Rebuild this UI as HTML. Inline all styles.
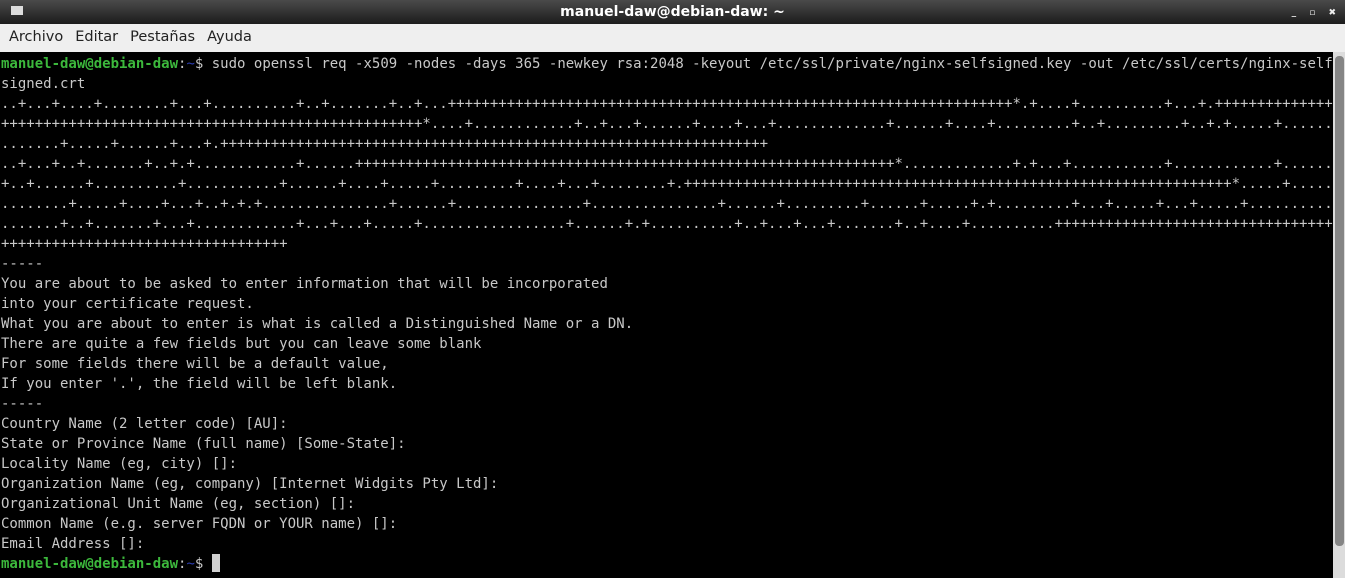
<!DOCTYPE html>
<html><head><meta charset="utf-8"><style>
html,body{margin:0;padding:0;width:1345px;height:578px;overflow:hidden;background:#000}
#title{position:absolute;left:0;top:0;width:1345px;height:24px;background:linear-gradient(#4a4a4a,#1c1c1c);color:#fff;font:bold 14px "DejaVu Sans","Liberation Sans",sans-serif;text-align:center;line-height:24px}
#title .ic{position:absolute;left:11px;top:6px;width:12px;height:9px;background:#ddd}
#title .btn{position:absolute;right:4px;top:1px;font-size:9px;color:#eee;letter-spacing:5px}
#menu{position:absolute;left:0;top:24px;width:1345px;height:28px;background:#efefef;font:14.5px "DejaVu Sans","Liberation Sans",sans-serif;color:#222;line-height:26px}
#menu span{margin-left:9px;margin-right:3px}
#term{position:absolute;left:0;top:52px;width:1333px;height:526px;background:#000;overflow:hidden}
pre{margin:0;padding:0;position:absolute;left:1px;top:2px;font:14px/20px "DejaVu Sans Mono","Liberation Mono",monospace;color:#c8c8c8;white-space:pre}
.g{color:#3cb83c;font-weight:bold}.b{color:#2a3cb0}
.cur{display:inline-block;width:8px;height:18px;background:#d0d0d0;vertical-align:-4px}
#sb{position:absolute;left:1333px;top:52px;width:12px;height:526px;background:#dcdcdc}
#thumb{position:absolute;left:2px;top:4px;width:9px;height:490px;background:#858585;border-radius:4px}
</style></head><body>
<div id="title"><div class="ic"></div>manuel-daw@debian-daw: ~<div class="btn">_ ▫ ✖</div></div>
<div id="menu"><span>Archivo</span><span>Editar</span><span>Pestañas</span><span>Ayuda</span></div>
<div id="term"><pre><span class="g">manuel-daw@debian-daw</span>:<span class="b">~</span>$ sudo openssl req -x509 -nodes -days 365 -newkey rsa:2048 -keyout /etc/ssl/private/nginx-selfsigned.key -out /etc/ssl/certs/nginx-self
signed.crt
..+...+....+........+...+..........+..+.......+..+...+++++++++++++++++++++++++++++++++++++++++++++++++++++++++++++++++++*.+....+..........+...+.++++++++++++++++
++++++++++++++++++++++++++++++++++++++++++++++++++*....+............+..+...+......+....+...+.............+......+....+.........+..+.........+..+.+.....+......
.......+.....+......+...+.+++++++++++++++++++++++++++++++++++++++++++++++++++++++++++++++++
..+...+..+.......+..+.+............+......++++++++++++++++++++++++++++++++++++++++++++++++++++++++++++++++*.............+.+...+...........+............+......
+..+......+..........+...........+......+....+.....+.........+....+...+........+.+++++++++++++++++++++++++++++++++++++++++++++++++++++++++++++++++*.....+.......
........+.....+....+...+..+.+.+...............+......+...............+...............+......+.........+......+.....+.+.........+...+.....+...+.....+..........
.......+..+.......+...+............+...+...+.....+.................+......+.+..........+..+...+...+.......+..+....+..........+++++++++++++++++++++++++++++++++
++++++++++++++++++++++++++++++++++
-----
You are about to be asked to enter information that will be incorporated
into your certificate request.
What you are about to enter is what is called a Distinguished Name or a DN.
There are quite a few fields but you can leave some blank
For some fields there will be a default value,
If you enter '.', the field will be left blank.
-----
Country Name (2 letter code) [AU]:
State or Province Name (full name) [Some-State]:
Locality Name (eg, city) []:
Organization Name (eg, company) [Internet Widgits Pty Ltd]:
Organizational Unit Name (eg, section) []:
Common Name (e.g. server FQDN or YOUR name) []:
Email Address []:
<span class="g">manuel-daw@debian-daw</span>:<span class="b">~</span>$ <span class="cur"></span></pre></div>
<div id="sb"><div id="thumb"></div></div>
</body></html>
